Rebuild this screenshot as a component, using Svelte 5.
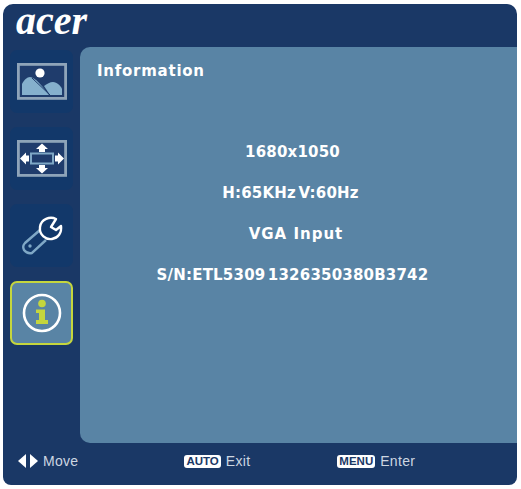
<script>
  const lines = [
    { text: '1680x1050' },
    { text: 'H:65KHz V:60Hz', tight: true },
    { text: 'VGA Input', wide: true },
    { text: 'S/N:ETL5309 1326350380B3742' }
  ];
</script>

<div class="osd">
  <header>
    <span class="logo">acer</span>
  </header>

  <div class="middle">
    <nav>
      <div class="tile">
        <svg width="50" height="37" viewBox="0 0 50 37">
          <rect x="1.4" y="1.4" width="47.2" height="34" fill="#1f3c6c" stroke="#8ea4b9" stroke-width="2.8" />
          <circle cx="23" cy="10" r="4.6" fill="#fff" />
          <path d="M5 32V21C7 17 10 14 13 14C18 14 26 24 32 32Z" fill="#85b0cd" />
          <path d="M27 23C30 21 33 19 36 19C40 19 44 23 45 26V32H33Z" fill="#85b0cd" />
          <path d="M15 15L33 32" stroke="#1f3c6c" stroke-width="1" fill="none" />
        </svg>
      </div>
      <div class="tile">
        <svg width="50" height="37" viewBox="0 0 50 37">
          <rect x="1.4" y="1.4" width="47.2" height="34" fill="#1f3c6c" stroke="#8ea4b9" stroke-width="2.8" />
          <rect x="14" y="13.5" width="22" height="10" fill="none" stroke="#7fa8c6" stroke-width="2" />
          <path d="M25 3.5L31 9H28V12H22V9H19Z" fill="#fff" />
          <path d="M25 33.5L31 28H28V25H22V28H19Z" fill="#fff" />
          <path d="M3 18.5L9 12.5V15.5H12V21.5H9V24.5Z" fill="#fff" />
          <path d="M47 18.5L41 12.5V15.5H38V21.5H41V24.5Z" fill="#fff" />
        </svg>
      </div>
      <div class="tile">
        <svg width="44" height="42" viewBox="0 0 44 42">
          <path d="M20 15L5 28Q2 31 4 35Q7 39 12 38L26 25" fill="none" stroke="#7fa8c6" stroke-width="2.4" />
          <circle cx="10" cy="31" r="1.7" fill="#7fa8c6" />
          <path d="M36 4C30 1 21 4 20 12C19 20 26 25 32 24C38 23 42 18 41 11L36 15L31 12Z" fill="#12386a" stroke="#fff" stroke-width="2.4" stroke-linejoin="round" />
        </svg>
      </div>
      <div class="tile active">
        <svg width="40" height="40" viewBox="0 0 40 40">
          <circle cx="20" cy="20" r="18" fill="none" stroke="#fff" stroke-width="2.6" />
          <circle cx="20" cy="10.5" r="3.8" fill="#c5d63d" />
          <path d="M14 16.5H23V27H26V31H14V27H17V20H14Z" fill="#c5d63d" />
        </svg>
      </div>
    </nav>

    <main>
      <h1>Information</h1>
      <div class="info">
        {#each lines as line}
          <p class:wide={line.wide} class:tight={line.tight}>{line.text}</p>
        {/each}
      </div>
    </main>
  </div>

  <footer>
    <div class="hint move">
      <svg width="22" height="14" viewBox="0 0 22 14">
        <path d="M9 0V14L1 7Z" fill="#fff" />
        <path d="M13 0V14L21 7Z" fill="#fff" />
      </svg>
      <span>Move</span>
    </div>
    <div class="hint exit"><b>AUTO</b><span>Exit</span></div>
    <div class="hint enter"><b>MENU</b><span>Enter</span></div>
  </footer>
</div>

<style>
  :global(body) {
    background: #fff;
  }
  .osd {
    width: 514px;
    height: 481px;
    margin: 4px 0 0 3px;
    background: #1a3866;
    border-radius: 10px 10px 8px 8px;
    display: flex;
    flex-direction: column;
    font-family: "DejaVu Sans", sans-serif;
    color: #fff;
  }
  header {
    height: 43px;
    padding-left: 13px;
    display: flex;
    align-items: center;
  }
  .logo {
    font-family: "Liberation Serif", serif;
    font-style: italic;
    font-weight: 700;
    font-size: 40px;
    line-height: 30px;
    margin-top: -9px;
  }
  .middle {
    flex: 1;
    display: flex;
    min-height: 0;
  }
  nav {
    width: 77px;
    padding: 3px 0 0 7px;
    box-sizing: border-box;
    display: flex;
    flex-direction: column;
    gap: 14px;
  }
  .tile {
    width: 63px;
    height: 63px;
    background: #12386a;
    border-radius: 7px;
    display: flex;
    align-items: center;
    justify-content: center;
  }
  .tile.active {
    box-sizing: border-box;
    background: #5984a5;
    border: 2px solid #c5d63d;
    height: 64px;
  }
  main {
    flex: 1;
    background: #5984a5;
    border-radius: 10px 0 0 10px;
    padding: 15px 17px;
  }
  h1 {
    margin: 0;
    font-size: 15px;
    font-weight: 700;
    line-height: 18px;
    letter-spacing: 0.75px;
  }
  .info {
    margin-top: 63px;
    display: flex;
    flex-direction: column;
    gap: 23px;
    align-items: center;
    padding-right: 12px;
  }
  p {
    margin: 0;
    font-size: 15px;
    font-weight: 700;
    line-height: 18px;
    letter-spacing: 0.2px;
    word-spacing: -3px;
  }
  p.wide {
    letter-spacing: 1px;
    word-spacing: 0;
    margin-left: 7px;
  }
  p.tight {
    margin-left: -4px;
  }
  footer {
    height: 42px;
    padding-bottom: 6px;
    box-sizing: border-box;
    display: flex;
    align-items: center;
    font-family: "Liberation Sans", sans-serif;
    font-size: 14px;
    letter-spacing: 0.3px;
    color: #cdd6e1;
  }
  .hint {
    display: flex;
    align-items: center;
    gap: 5px;
  }
  .move {
    margin-left: 14px;
    gap: 4px;
  }
  .exit {
    margin-left: 106px;
  }
  .enter {
    margin-left: 87px;
  }
  .hint b {
    background: #fff;
    color: #1a3866;
    font-size: 11.5px;
    line-height: 13px;
    letter-spacing: 0;
    padding: 0 2px;
    border-radius: 3px;
  }
</style>
